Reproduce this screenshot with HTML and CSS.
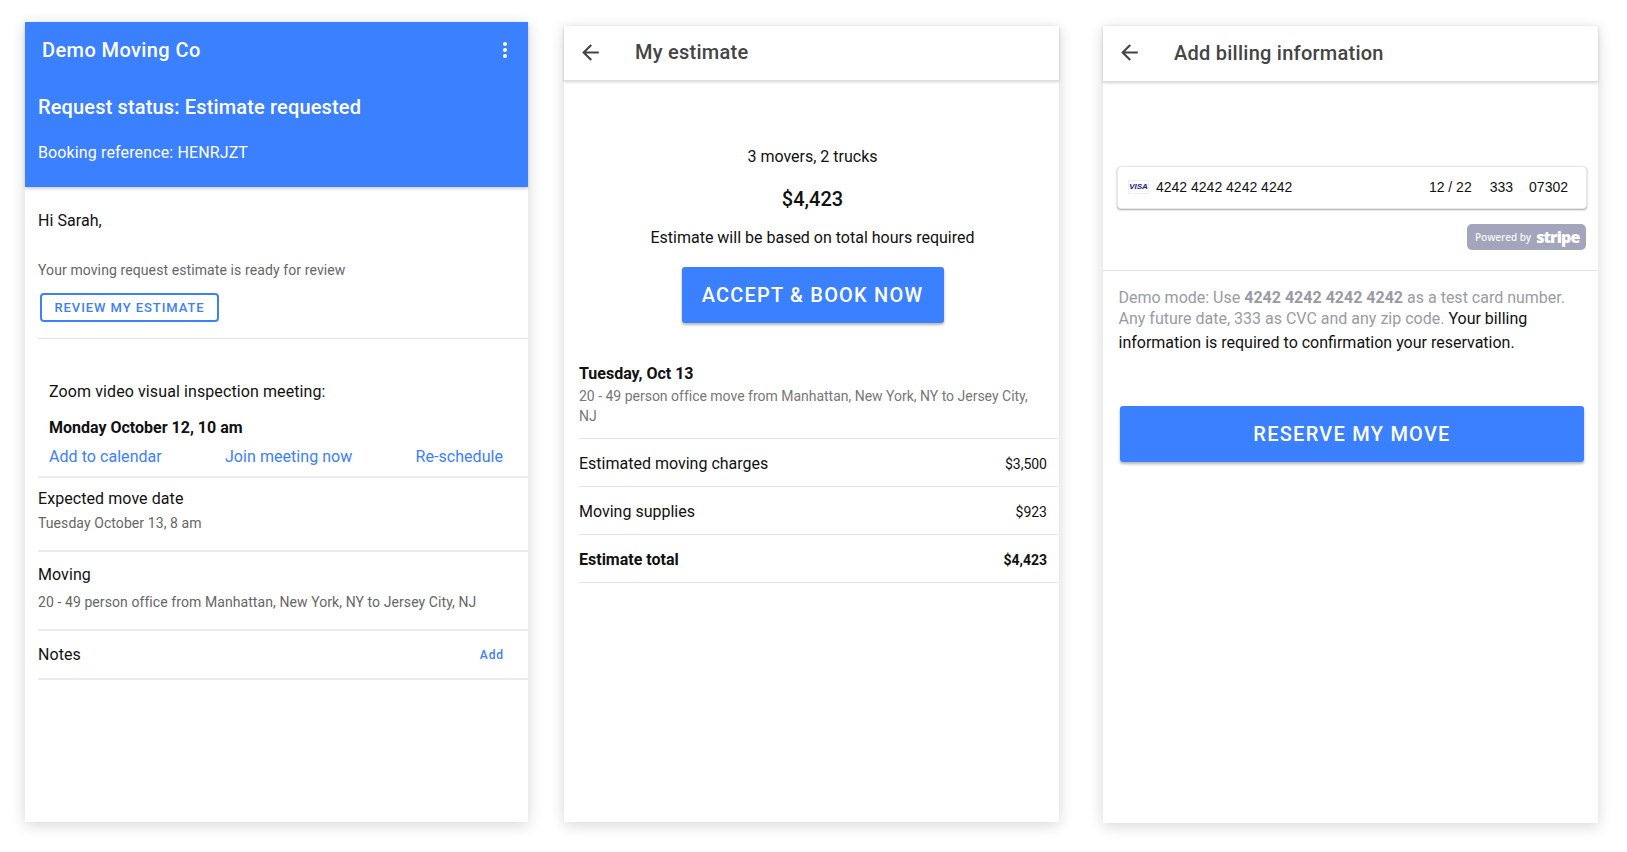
FILE: index.html
```html
<!DOCTYPE html>
<html lang="en">
<head>
<meta charset="utf-8">
<title>Moving app screens</title>
<link rel="stylesheet" href="styles.css">
</head>
<body>
<main class="screens">
  <section class="panel panel-status">
    <header class="status-head">
      <div class="brand-row">
        <span class="brand">Demo Moving Co</span>
        <svg class="dots" viewBox="0 0 4 16" width="4" height="16"><circle cx="2" cy="2" r="2"/><circle cx="2" cy="8" r="2"/><circle cx="2" cy="14" r="2"/></svg>
      </div>
      <div class="status-title">Request status: Estimate requested</div>
      <div class="status-ref">Booking reference: HENRJZT</div>
    </header>
    <div class="intro">
      <p class="hi">Hi Sarah,</p>
      <p class="ready">Your moving request estimate is ready for review</p>
      <a class="outline-btn">REVIEW MY ESTIMATE</a>
    </div>
    <div class="meeting">
      <p class="meet-label">Zoom video visual inspection meeting:</p>
      <p class="meet-date">Monday October 12, 10 am</p>
      <div class="meet-links">
        <a class="link">Add to calendar</a>
        <a class="link">Join meeting now</a>
        <a class="link">Re-schedule</a>
      </div>
    </div>
    <div class="info info-date">
      <p class="info-label">Expected move date</p>
      <p class="info-sub">Tuesday October 13, 8 am</p>
    </div>
    <div class="info info-moving">
      <p class="info-label">Moving</p>
      <p class="info-sub">20 - 49 person office from Manhattan, New York, NY to Jersey City, NJ</p>
    </div>
    <div class="notes">
      <span class="info-label">Notes</span>
      <a class="add">Add</a>
    </div>
  </section>

  <section class="panel panel-estimate">
    <header class="bar">
      <svg class="back" viewBox="0 0 24 24" width="25" height="25"><path d="M20 11H7.83l5.59-5.59L12 4l-8 8 8 8 1.41-1.41L7.83 13H20v-2z"/></svg>
      <h1 class="bar-title">My estimate</h1>
    </header>
    <div class="summary">
      <p class="crew">3 movers, 2 trucks</p>
      <p class="price">$4,423</p>
      <p class="basis">Estimate will be based on total hours required</p>
      <a class="solid-btn accept">ACCEPT &amp; BOOK NOW</a>
    </div>
    <div class="move">
      <p class="move-date">Tuesday, Oct 13</p>
      <p class="move-desc">20 - 49 person office move from Manhattan, New York, NY to Jersey City, NJ</p>
    </div>
    <div class="line"><span class="line-name">Estimated moving charges</span><span class="line-val">$3,500</span></div>
    <div class="line"><span class="line-name">Moving supplies</span><span class="line-val">$923</span></div>
    <div class="line line-total"><span class="line-name">Estimate total</span><span class="line-val">$4,423</span></div>
  </section>

  <section class="panel panel-billing">
    <header class="bar bar-billing">
      <svg class="back" viewBox="0 0 24 24" width="25" height="25"><path d="M20 11H7.83l5.59-5.59L12 4l-8 8 8 8 1.41-1.41L7.83 13H20v-2z"/></svg>
      <h1 class="bar-title">Add billing information</h1>
    </header>
    <div class="card-area">
      <div class="card-field">
        <span class="visa">VISA</span>
        <span class="card-num">4242 4242 4242 4242</span>
        <span class="card-exp">12 / 22</span>
        <span class="card-cvc">333</span>
        <span class="card-zip">07302</span>
      </div>
      <div class="stripe-row">
        <span class="stripe-badge"><span class="powered">Powered by</span><span class="stripe">stripe</span></span>
      </div>
    </div>
    <div class="billing-note">
      <div class="note-line">
        <span class="muted">Demo mode: Use</span>
        <b class="muted">4242 4242 4242 4242</b>
        <span class="muted">as a test card number.</span>
      </div>
      <div class="note-line">
        <span class="muted">Any future date, 333 as CVC and any zip code.</span>
        <span>Your billing</span>
      </div>
      <div class="note-line note-last">information is required to confirmation your reservation.</div>
      <a class="solid-btn reserve">RESERVE MY MOVE</a>
    </div>
  </section>
</main>
</body>
</html>
```

FILE: styles.css
```css
* { box-sizing: border-box; }
html, body { margin: 0; padding: 0; }
body {
  background: #fff;
  font-family: Roboto, "Liberation Sans", sans-serif;
  color: #111;
  width: 1627px;
  height: 852px;
  overflow: hidden;
}
p, h1 { margin: 0; }
.screens {
  display: flex;
  align-items: flex-start;
  padding: 22px 0 0 25px;
}
.panel {
  background: #fff;
  box-shadow: 0 3px 14px rgba(0, 0, 0, 0.16);
  flex: none;
}
.panel-status { width: 503px; height: 800px; }
.panel-estimate { width: 495px; height: 796px; margin: 4px 0 0 36px; }
.panel-billing { width: 495px; height: 797px; margin: 4px 0 0 44px; }

/* Status panel */
.status-head {
  background: #3b80ff;
  color: #fff;
  height: 165px;
  padding: 17px 13px 0;
  box-shadow: 0 2px 3px rgba(0, 0, 0, 0.18);
}
.brand-row {
  display: flex;
  justify-content: space-between;
  align-items: center;
  height: 22px;
  padding: 0 8px 0 4px;
}
.brand { font-size: 20px; font-weight: 500; letter-spacing: 0.4px; }
.dots { fill: #fff; display: block; }
.status-title { font-size: 20px; font-weight: 500; line-height: 24px; margin-top: 34px; letter-spacing: 0.15px; }
.status-ref { font-size: 16px; line-height: 20px; margin-top: 24px; letter-spacing: 0.13px; }
.intro {
  height: 152px;
  margin-left: 13px;
  padding-top: 24px;
  border-bottom: 1px solid #e3e3e3;
}
.hi { font-size: 16px; line-height: 20px; letter-spacing: 0.05px; }
.ready { font-size: 14px; line-height: 18px; color: #666; margin-top: 30px; letter-spacing: 0.1px; }
.outline-btn {
  display: flex;
  align-items: center;
  justify-content: center;
  width: 179px;
  height: 29px;
  margin: 14px 0 0 2px;
  border: 2px solid #3b80ff;
  border-radius: 4px;
  color: #3b80ff;
  font-size: 13px;
  font-weight: 500;
  letter-spacing: 0.93px;
}
.meeting {
  height: 139px;
  margin-left: 13px;
  padding: 43px 25px 0 11px;
  border-bottom: 2px solid #ececec;
}
.meet-label { font-size: 16px; line-height: 20px; letter-spacing: 0.1px; }
.meet-date { font-size: 16px; line-height: 20px; font-weight: 700; margin-top: 16px; }
.meet-links { display: flex; justify-content: space-between; margin-top: 9px; }
.link { color: #3b80ff; font-size: 16px; line-height: 20px; letter-spacing: 0.05px; }
.info { margin-left: 13px; border-bottom: 2px solid #ececec; }
.info-date { height: 74px; padding-top: 11px; }
.info-moving { height: 79px; padding-top: 13px; }
.info-label { font-size: 16px; line-height: 20px; letter-spacing: 0.07px; }
.info-sub { font-size: 14px; line-height: 18px; color: #666; letter-spacing: 0.08px; }
.info-date .info-sub { margin-top: 5px; }
.info-moving .info-sub { margin-top: 8px; }
.notes {
  display: flex;
  justify-content: space-between;
  align-items: center;
  height: 49px;
  margin-left: 13px;
  padding: 1px 24px 0 0;
  border-bottom: 2px solid #ececec;
}
.add { color: #3b80ff; font-size: 12px; font-weight: 500; letter-spacing: 0.9px; }

/* Top bars */
.bar {
  display: flex;
  align-items: center;
  height: 55px;
  padding: 0 0 2px 14px;
  gap: 32px;
  border-bottom: 1px solid #ddd;
  box-shadow: 0 1px 3px rgba(0, 0, 0, 0.18);
}
.bar-billing { height: 56px; }
.back { fill: #444; flex: none; display: block; }
.bar-title { font-size: 20px; font-weight: 500; color: #444; letter-spacing: 0.25px; }

/* Estimate panel */
.summary {
  display: flex;
  flex-direction: column;
  align-items: center;
  height: 280px;
  padding: 66px 0 0 2px;
}
.crew { font-size: 16px; line-height: 20px; }
.price { font-size: 20px; line-height: 24px; font-weight: 500; margin-top: 20px; }
.basis { font-size: 16px; line-height: 20px; margin-top: 17px; }
.solid-btn {
  display: flex;
  align-items: center;
  justify-content: center;
  background: #3b80ff;
  color: #fff;
  border-radius: 3px;
  font-weight: 500;
  font-size: 20px;
  box-shadow: 0 2px 3px rgba(0, 0, 0, 0.3);
}
.accept { width: 262px; height: 56px; margin-top: 19px; letter-spacing: 1.2px; }
.move {
  height: 78px;
  margin-left: 15px;
  padding-top: 3px;
  border-bottom: 1px solid #e3e3e3;
}
.move-date { font-size: 16px; line-height: 20px; font-weight: 700; }
.move-desc { font-size: 14px; line-height: 20px; color: #777; margin-top: 2px; padding-right: 14px; letter-spacing: -0.01px; }
.line {
  display: flex;
  justify-content: space-between;
  align-items: center;
  height: 48px;
  margin-left: 15px;
  padding: 2px 12px 0 0;
  border-bottom: 1px solid #e3e3e3;
}
.line-name { font-size: 16px; }
.line-val { font-size: 14px; }
.line-total { font-weight: 700; }

/* Billing panel */
.card-area {
  height: 189px;
  padding: 84px 11px 0 14px;
  border-bottom: 1px solid #e3e3e3;
}
.card-field {
  display: flex;
  align-items: center;
  height: 43px;
  padding: 0 18px 2px 10px;
  background: #fff;
  border: 1px solid #e6e6e6;
  border-radius: 4px;
  box-shadow: 0 1px 2px rgba(0, 0, 0, 0.35);
  font-family: "Liberation Sans", Arial, sans-serif;
  font-size: 14px;
  color: #111;
}
.visa {
  display: flex;
  align-items: center;
  justify-content: center;
  width: 21px;
  height: 14px;
  margin-right: 7px;
  background: #fbfbff;
  border: 1px solid #eeeef4;
  border-radius: 1px;
  color: #1a1f71;
  font-size: 8px;
  font-weight: 700;
  font-style: italic;
}
.card-num { flex: 1; }
.card-cvc { margin-left: 18px; margin-right: 2px; }
.card-zip { margin-left: 14px; }
.stripe-row { display: flex; justify-content: flex-end; margin: 15px 1px 0 0; }
.stripe-badge {
  display: flex;
  align-items: center;
  gap: 5px;
  width: 119px;
  height: 26px;
  padding-left: 8px;
  background: #a3a5bd;
  border-radius: 5px;
  color: #fff;
}
.powered { font-family: "Open Sans", sans-serif; font-size: 10px; font-weight: 600; letter-spacing: -0.05px; white-space: nowrap; opacity: 0.9; }
.stripe { font-family: "Open Sans", sans-serif; font-size: 16px; font-weight: 800; letter-spacing: -0.85px; line-height: 1; }
.billing-note { padding: 16px 12px 0 15.5px; }
.note-line { font-size: 16px; line-height: 21px; color: #111; white-space: nowrap; display: flex; gap: 4px; }
.note-last { line-height: 27px; }
.muted { color: #9a9aa6; }
.reserve { width: 464px; height: 56px; margin: 50px 0 0 1.5px; letter-spacing: 1.25px; }
```
